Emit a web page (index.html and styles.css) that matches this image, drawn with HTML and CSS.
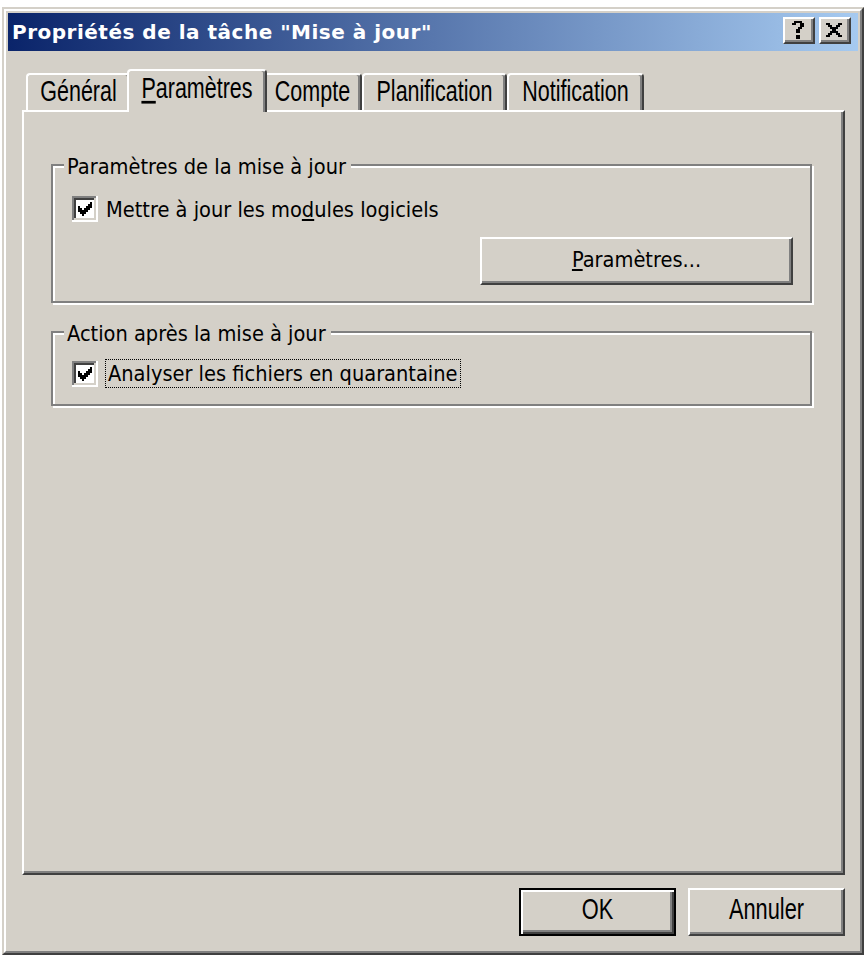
FILE: index.html
```html
<!DOCTYPE html>
<html lang="fr">
<head>
<meta charset="utf-8">
<title>Propriétés de la tâche "Mise à jour"</title>
<link rel="stylesheet" href="styles.css">
</head>
<body>
<div class="window">
  <div class="window-inner">
    <div class="titlebar">
      <span class="title">Propriétés de la tâche "Mise à jour"</span>
      <div class="caption-buttons">
        <button class="cap-btn" aria-label="Aide">
          <svg class="glyph-help" width="12" height="18" viewBox="0 0 6 9" shape-rendering="crispEdges"><path d="M1 0h4v1h-4z M0 1h2v1h-2z M4 1h2v2h-2z M3 3h2v1h-2z M2 4h2v2h-2z M2 7h2v2h-2z" fill="#000"/></svg>
        </button>
        <button class="cap-btn" aria-label="Fermer">
          <svg class="glyph-close" width="16" height="14" viewBox="0 0 8 7" shape-rendering="crispEdges"><path d="M0 0h2v1h-2z M6 0h2v1h-2z M1 1h2v1h-2z M5 1h2v1h-2z M2 2h4v1h-4z M3 3h2v1h-2z M2 4h4v1h-4z M1 5h2v1h-2z M5 5h2v1h-2z M0 6h2v1h-2z M6 6h2v1h-2z" fill="#000"/></svg>
        </button>
      </div>
    </div>

    <div class="tabs">
      <div class="tab tab-general"><span class="tab-label">Général</span></div>
      <div class="tab tab-settings tab-selected"><span class="tab-label"><u>P</u>aramètres</span></div>
      <div class="tab tab-account"><span class="tab-label">Compte</span></div>
      <div class="tab tab-schedule"><span class="tab-label">Planification</span></div>
      <div class="tab tab-notify"><span class="tab-label">Notification</span></div>
    </div>

    <div class="panel">
      <div class="group group-update">
        <span class="group-label">Paramètres de la mise à jour</span>
        <div class="check-row">
          <svg class="checkbox" width="26" height="26" viewBox="0 0 13 13" shape-rendering="crispEdges">
            <rect x="0" y="0" width="13" height="13" fill="#fff"/>
            <rect x="0" y="0" width="12" height="12" fill="#808080"/>
            <rect x="1" y="1" width="11" height="11" fill="#d4d0c8"/>
            <rect x="1" y="1" width="10" height="10" fill="#404040"/>
            <rect x="2" y="2" width="9" height="9" fill="#fff"/>
            <path d="M9 3h1v1h-1z M8 4h2v1h-2z M3 5h1v1h-1z M7 5h3v1h-3z M3 6h2v1h-2z M6 6h3v1h-3z M3 7h5v1h-5z M4 8h3v1h-3z M5 9h1v1h-1z" fill="#000"/>
          </svg>
          <span class="check-text">Mettre à jour les mo<u>d</u>ules logiciels</span>
        </div>
        <div class="btn-row">
          <button class="btn btn-settings"><u>P</u>aramètres...</button>
        </div>
      </div>

      <div class="group group-action">
        <span class="group-label">Action après la mise à jour</span>
        <div class="check-row">
          <svg class="checkbox" width="26" height="26" viewBox="0 0 13 13" shape-rendering="crispEdges">
            <rect x="0" y="0" width="13" height="13" fill="#fff"/>
            <rect x="0" y="0" width="12" height="12" fill="#808080"/>
            <rect x="1" y="1" width="11" height="11" fill="#d4d0c8"/>
            <rect x="1" y="1" width="10" height="10" fill="#404040"/>
            <rect x="2" y="2" width="9" height="9" fill="#fff"/>
            <path d="M9 3h1v1h-1z M8 4h2v1h-2z M3 5h1v1h-1z M7 5h3v1h-3z M3 6h2v1h-2z M6 6h3v1h-3z M3 7h5v1h-5z M4 8h3v1h-3z M5 9h1v1h-1z" fill="#000"/>
          </svg>
          <span class="check-text check-focused">Analyser les fichiers en quarantaine</span>
        </div>
      </div>
    </div>

    <div class="dialog-buttons">
      <button class="btn btn-push btn-default"><span class="push-label">OK</span></button>
      <button class="btn btn-push"><span class="push-label">Annuler</span></button>
    </div>
  </div>
</div>
</body>
</html>
```

FILE: styles.css
```css
* {
  box-sizing: border-box;
}

html,
body {
  margin: 0;
  padding: 0;
}

body {
  background: #ffffff;
  color: #000000;
  font-family: "DejaVu Sans Condensed", "DejaVu Sans", sans-serif;
  font-stretch: condensed;
  font-size: 21.6px;
}

/* ---------- window frame ---------- */
.window {
  margin: 7px 0 0 2px;
  width: 862px;
  height: 948px;
  background: #d4d0c8;
  border: 2px solid;
  border-color: #d4d0c8 #404040 #404040 #d4d0c8;
}

.window-inner {
  height: 100%;
  display: flex;
  flex-direction: column;
  padding: 2px;
  border: 2px solid;
  border-color: #ffffff #808080 #808080 #ffffff;
}

/* ---------- title bar ---------- */
.titlebar {
  flex: none;
  height: 38px;
  display: flex;
  justify-content: space-between;
  align-items: flex-start;
  padding: 0 7px 0 4px;
  background: linear-gradient(to right, #0a246a 0%, #a6caf0 100%);
}

.title {
  color: #ffffff;
  font-family: "DejaVu Sans", sans-serif;
  font-stretch: normal;
  font-weight: bold;
  font-size: 20px;
  letter-spacing: 0.5px;
  line-height: 38px;
  white-space: nowrap;
}

.caption-buttons {
  display: flex;
  gap: 4px;
  margin-top: 4px;
}

.cap-btn {
  width: 32px;
  height: 27px;
  margin: 0;
  padding: 0 2px 2px 0;
  display: flex;
  align-items: center;
  justify-content: center;
  background: #d4d0c8;
  border: 2px solid;
  border-color: #ffffff #404040 #404040 #ffffff;
  box-shadow: inset -2px -2px 0 #808080;
}

.cap-btn svg {
  display: block;
}

/* ---------- tabs ---------- */
.tabs {
  flex: none;
  height: 41px;
  display: flex;
  align-items: flex-end;
  margin: 18px 0 0 18px;
}

.tab {
  height: 37px;
  display: flex;
  align-items: center;
  justify-content: center;
  background: #d4d0c8;
  border-top: 2px solid #ffffff;
  border-left: 2px solid #ffffff;
  border-right: 2px solid #404040;
  border-radius: 4px 4px 0 0;
  box-shadow: inset -2px 0 0 #808080;
  font-family: "Liberation Sans", Arial, sans-serif;
  font-stretch: normal;
  font-size: 21.5px;
  white-space: nowrap;
}

.tab-label {
  display: inline-block;
  line-height: 1;
  transform: scaleY(1.35);
}

.tab-general { width: 105px; }
.tab-settings { width: 140px; }
.tab-account { width: 99px; }
.tab-schedule { width: 145px; }
.tab-notify { width: 137px; }

.tab-selected {
  position: relative;
  z-index: 1;
  height: 43px;
  margin: 0 -4px -2px -4px;
  padding-bottom: 4px;
}

/* ---------- tab panel ---------- */
.panel {
  flex: none;
  height: 765px;
  margin: 0 13px 0 14px;
  padding: 52px 31px 0 27px;
  border: 2px solid;
  border-color: #ffffff #404040 #404040 #ffffff;
  box-shadow: inset -2px -2px 0 #808080;
}

.group {
  position: relative;
  border: 2px solid #808080;
  box-shadow: inset 2px 2px 0 #ffffff, 2px 2px 0 #ffffff;
}

.group-update {
  padding: 29px 17px 16px 19px;
}

.group-action {
  margin-top: 28px;
  padding: 27px 17px 17px 19px;
}

.group-label {
  position: absolute;
  top: -12px;
  left: 11px;
  padding: 0 5px 0 3px;
  background: #d4d0c8;
  line-height: 26px;
  white-space: nowrap;
}

.check-row {
  height: 27px;
  display: flex;
  align-items: center;
}

.checkbox {
  flex: none;
  display: block;
}

.check-text {
  margin-left: 8px;
  padding-top: 2px;
  line-height: 26px;
  white-space: nowrap;
}

.check-focused {
  margin-left: 7px;
  padding: 1px 2px 0 2px;
  border: 1px dotted #000000;
}

.btn-row {
  display: flex;
  justify-content: flex-end;
  margin-top: 15px;
}

/* ---------- buttons ---------- */
.btn {
  margin: 0;
  padding: 0;
  color: #000000;
  font: inherit;
  background: #d4d0c8;
  border: 2px solid;
  border-color: #ffffff #404040 #404040 #ffffff;
  box-shadow: inset -2px -2px 0 #808080;
}

.btn-settings {
  width: 313px;
  height: 48px;
  line-height: 26px;
  padding-bottom: 3px;
}

.dialog-buttons {
  flex: none;
  display: flex;
  justify-content: flex-end;
  gap: 12px;
  margin: 13px 13px 0 0;
}

.btn-push {
  width: 157px;
  height: 48px;
  padding-bottom: 4px;
  font-family: "Liberation Sans", Arial, sans-serif;
  font-stretch: normal;
  font-size: 21.8px;
}

.push-label {
  display: inline-block;
  line-height: 1;
  transform: scaleY(1.35);
}

.btn-default {
  border-color: #000000;
  box-shadow: inset 2px 2px 0 #ffffff, inset -2px -2px 0 #404040, inset -4px -4px 0 #808080;
}
```
